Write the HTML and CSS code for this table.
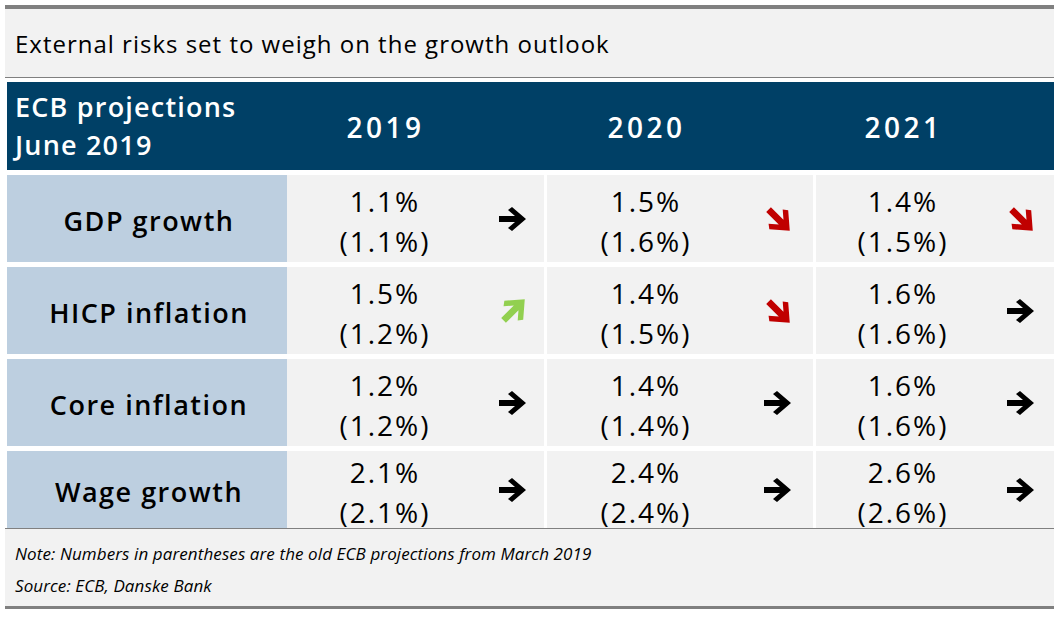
FILE: index.html
```html
<!DOCTYPE html>
<html lang="en">
<head>
<meta charset="utf-8">
<title>ECB projections</title>
<link rel="stylesheet" href="styles.css">
</head>
<body>
<svg class="defs" width="0" height="0" aria-hidden="true">
  <defs>
    <polygon id="arrow" points="0,9 16,9 9,3 13,0 27,12 13,24 9,21 16,15 0,15"/>
  </defs>
</svg>
<div class="frame">
  <div class="topbar"></div>
  <div class="title">External risks set to weigh on the growth outlook</div>
  <div class="rule"></div>
  <div class="table">
    <div class="row head">
      <div class="label">ECB projections<br>June 2019</div>
      <div class="cell c19"><div class="val">2019</div><div class="arr"></div></div>
      <div class="cell c20"><div class="val">2020</div><div class="arr"></div></div>
      <div class="cell c21"><div class="val">2021</div><div class="arr"></div></div>
    </div>

    <div class="row">
      <div class="label">GDP growth</div>
      <div class="cell c19"><div class="val">1.1%<br>(1.1%)</div><div class="arr"><svg class="ic flat" viewBox="0 0 28 24"><use href="#arrow"/></svg></div></div>
      <div class="cell c20"><div class="val">1.5%<br>(1.6%)</div><div class="arr"><svg class="ic down" viewBox="-12.2 -12.2 21.6 21.6"><g transform="rotate(45) translate(-14 -12)"><use href="#arrow"/></g></svg></div></div>
      <div class="cell c21"><div class="val">1.4%<br>(1.5%)</div><div class="arr"><svg class="ic down" viewBox="-12.2 -12.2 21.6 21.6"><g transform="rotate(45) translate(-14 -12)"><use href="#arrow"/></g></svg></div></div>
    </div>

    <div class="row">
      <div class="label">HICP inflation</div>
      <div class="cell c19"><div class="val">1.5%<br>(1.2%)</div><div class="arr"><svg class="ic up" viewBox="-12.2 -9.4 21.6 21.6"><g transform="rotate(-45) translate(-14 -12)"><use href="#arrow"/></g></svg></div></div>
      <div class="cell c20"><div class="val">1.4%<br>(1.5%)</div><div class="arr"><svg class="ic down" viewBox="-12.2 -12.2 21.6 21.6"><g transform="rotate(45) translate(-14 -12)"><use href="#arrow"/></g></svg></div></div>
      <div class="cell c21"><div class="val">1.6%<br>(1.6%)</div><div class="arr"><svg class="ic flat" viewBox="0 0 28 24"><use href="#arrow"/></svg></div></div>
    </div>

    <div class="row">
      <div class="label">Core inflation</div>
      <div class="cell c19"><div class="val">1.2%<br>(1.2%)</div><div class="arr"><svg class="ic flat" viewBox="0 0 28 24"><use href="#arrow"/></svg></div></div>
      <div class="cell c20"><div class="val">1.4%<br>(1.4%)</div><div class="arr"><svg class="ic flat" viewBox="0 0 28 24"><use href="#arrow"/></svg></div></div>
      <div class="cell c21"><div class="val">1.6%<br>(1.6%)</div><div class="arr"><svg class="ic flat" viewBox="0 0 28 24"><use href="#arrow"/></svg></div></div>
    </div>

    <div class="row last">
      <div class="label">Wage growth</div>
      <div class="cell c19"><div class="val">2.1%<br>(2.1%)</div><div class="arr"><svg class="ic flat" viewBox="0 0 28 24"><use href="#arrow"/></svg></div></div>
      <div class="cell c20"><div class="val">2.4%<br>(2.4%)</div><div class="arr"><svg class="ic flat" viewBox="0 0 28 24"><use href="#arrow"/></svg></div></div>
      <div class="cell c21"><div class="val">2.6%<br>(2.6%)</div><div class="arr"><svg class="ic flat" viewBox="0 0 28 24"><use href="#arrow"/></svg></div></div>
    </div>
  </div>
  <div class="footer">
    <p>Note: Numbers in parentheses are the old ECB projections from March 2019</p>
    <p>Source: ECB, Danske Bank</p>
  </div>
  <div class="bottombar"></div>
</div>
</body>
</html>
```

FILE: styles.css
```css
html, body {
  margin: 0;
  padding: 0;
  background: #ffffff;
}

body {
  font-family: "Open Sans", "Liberation Sans", sans-serif;
  color: #000000;
}

.defs {
  position: absolute;
  width: 0;
  height: 0;
}

.frame {
  width: 1049px;
  margin: 5px 0 0 5px;
}

.topbar {
  height: 4px;
  background: #808080;
}

.title {
  height: 68px;
  background: #f2f2f2;
  display: flex;
  align-items: center;
  padding-left: 10px;
  font-size: 24px;
  letter-spacing: 1px;
}

.rule {
  height: 1px;
  background: #808080;
}

.table {
  margin-left: 2px;
  width: 1047px;
}

.row {
  display: flex;
  height: 87px;
  margin-top: 5px;
}

.row.head {
  height: 88px;
  margin-top: 4px;
  background: #004066;
  color: #ffffff;
}

.row.last {
  height: 77px;
}

.label {
  width: 280px;
  flex: none;
  box-sizing: border-box;
  background: #bdcfe0;
  display: flex;
  align-items: center;
  justify-content: center;
  padding: 3px 0 0 4px;
  font-size: 27px;
  font-weight: 600;
  letter-spacing: 1.5px;
}

.head .label {
  background: transparent;
  justify-content: flex-start;
  padding: 0 0 0 8px;
  line-height: 38px;
  font-size: 27px;
  font-weight: 600;
  letter-spacing: 1.2px;
}

.cell {
  display: flex;
  flex: none;
  background: #f2f2f2;
}

.head .cell {
  background: transparent;
}

.c19 { width: 257px; }
.c20 { width: 266px; margin-left: 3px; }
.c21 { width: 238px; margin-left: 3px; }

.c19 .val { width: 194px; }
.c20 .val { width: 196px; }
.c21 .val { width: 172px; }

.val {
  flex: none;
  box-sizing: border-box;
  display: flex;
  align-items: center;
  justify-content: center;
  text-align: center;
  padding: 4px 0 0 2px;
  font-size: 28px;
  line-height: 40px;
  font-weight: 400;
  letter-spacing: 2px;
}

.head .val {
  padding: 2px 0 0 3px;
  font-size: 28px;
  font-weight: 600;
  letter-spacing: 3.5px;
}

.arr {
  flex: 1;
  display: flex;
  align-items: center;
  justify-content: center;
}

.ic {
  display: block;
}

.ic.flat {
  width: 28px;
  height: 24px;
  fill: #000000;
}

.ic.down {
  width: 24px;
  height: 24px;
  fill: #c00000;
}

.ic.up {
  width: 24px;
  height: 24px;
  fill: #92d050;
}

.footer {
  border-top: 1px solid #808080;
  height: 78px;
  background: #f2f2f2;
  padding: 9px 0 0 10px;
  box-sizing: border-box;
  font-style: italic;
  font-size: 17px;
  letter-spacing: 0.1px;
}

.footer p {
  margin: 0;
  line-height: 32px;
}

.bottombar {
  height: 3px;
  background: #808080;
}
```
